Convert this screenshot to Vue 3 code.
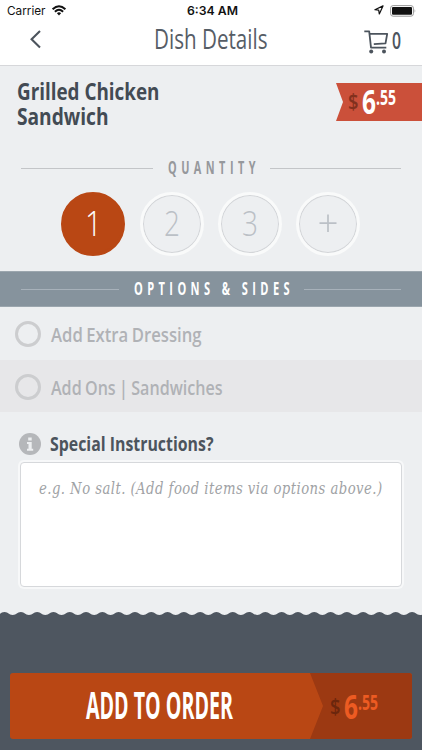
<script setup>
import { h, ref } from 'vue'

// Condensed label: real text fitted to a fixed advance width.
const FitText = (p) =>
  h('svg', { width: p.w, height: p.h }, [
    h('text', { x: 0, y: p.base, textLength: p.w, lengthAdjust: 'spacingAndGlyphs' }, p.t),
  ])
FitText.props = ['t', 'w', 'h', 'base']

const quantity = ref(0)
const amounts = [
  { t: '1', w: 17 },
  { t: '2', w: 16 },
  { t: '3', w: 16 },
  { t: '+', w: 0 },
]
const options = [
  { t: 'Add Extra Dressing', w: 150.5 },
  { t: 'Add Ons | Sandwiches', w: 171.5 },
]

// Scalloped upper edge of the footer
let wave = 'M-3.6 3'
for (let i = 0; i < 28; i++) wave += ' c4 0 4.2 -3 8.15 -3 s4.1 3 8.15 3'
wave += ' V6 H-4 Z'
</script>

<template>
  <main class="screen">
    <header class="top">
      <div class="status">
        <div class="carrier">
          <FitText t="Carrier" :w="38.5" :h="20" :base="15.3" />
          <svg class="wifi" width="14" height="11" viewBox="0 0 14 11">
            <path d="M.6 4.3 Q7 -1.7 13.4 4.3" />
            <path d="M2.9 6.7 Q7 2.9 11.1 6.7" />
            <path class="dot" d="M4.9 8.2 Q7 6.5 9.1 8.2 L7 10.4 Z" />
          </svg>
        </div>
        <FitText class="clock" t="6:34 AM" :w="51" :h="20" :base="15.3" />
        <div class="power">
          <svg width="10" height="10" viewBox="0 0 10 10">
            <path class="arrow" d="M9 .9 L.9 4.7 L4.7 5.2 L5.3 9 Z" />
          </svg>
          <svg width="27" height="12" viewBox="0 0 27 12">
            <rect class="shell" x=".6" y=".6" width="22.8" height="10.6" rx="2.5" />
            <rect x="2" y="2" width="20" height="7.8" rx="1" />
            <path class="cap" d="M24.6 4 Q26.2 5.9 24.6 7.8 Z" />
          </svg>
        </div>
      </div>
      <nav class="bar">
        <svg class="back" width="12" height="19" viewBox="0 0 12 19">
          <path d="M10 1 L1.6 9.2 L10 17.4" />
        </svg>
        <FitText class="title" t="Dish Details" :w="113.5" :h="32" :base="27.3" />
        <div class="cart">
          <svg width="25" height="25" viewBox="0 0 25 25">
            <path d="M.3 1.3 H5.2 L7 17.6 H22.3 M5.7 3.8 H23.2 L21.5 13.4 L9.8 14.2" />
            <circle cx="7.2" cy="21.4" r="2" />
            <circle cx="20" cy="21.4" r="2" />
          </svg>
          <FitText class="count" t="0" :w="9" :h="25" :base="19.2" />
        </div>
      </nav>
    </header>

    <section class="dish">
      <h1>
        <FitText t="Grilled Chicken" :w="142.5" :h="25" :base="19" />
        <FitText t="Sandwich" :w="91.5" :h="25" :base="19" />
      </h1>
      <div class="ribbon">
        <FitText class="cur" t="$" :w="10.5" :h="38" :base="26.3" />
        <FitText class="whole" t="6" :w="14" :h="38" :base="31" />
        <FitText class="cents" t=".55" :w="20" :h="38" :base="22" />
      </div>
    </section>

    <div class="heading">
      <i></i>
      <FitText t="QUANTITY" :w="92" :h="20" :base="16" />
      <i></i>
    </div>

    <div class="amounts">
      <button v-for="(a, i) in amounts" :key="a.t" :class="{ on: quantity === i }" @click="quantity = i">
        <FitText v-if="a.w" :t="a.t" :w="a.w" :h="40" :base="31.5" />
        <svg v-else class="plus" width="18" height="20" viewBox="0 0 18 20"><path d="M.5 9.2 H17.5 M9 .5 V18" /></svg>
      </button>
    </div>

    <div class="heading band">
      <i></i>
      <FitText t="OPTIONS &amp; SIDES" :w="160" :h="20" :base="16" />
      <i></i>
    </div>

    <ul class="options">
      <li v-for="o in options" :key="o.t">
        <span class="radio"></span>
        <FitText :t="o.t" :w="o.w" :h="28" :base="21.5" />
      </li>
    </ul>

    <section class="notes">
      <div class="label">
        <svg class="info" width="22" height="22" viewBox="0 0 22 22">
          <circle cx="11" cy="11" r="11" />
          <path d="M9.2 4.5 h3.5 v3 h-3.5 z M8 9 h4.7 v6.8 h1.5 v2 H8 v-2 h1.5 v-4.8 H8 z" />
        </svg>
        <FitText t="Special Instructions?" :w="163.5" :h="28" :base="21" />
      </div>
      <div class="field">
        <FitText t="e.g. No salt. (Add food items via options above.)" :w="343.5" :h="28" :base="20" />
      </div>
    </section>

    <footer>
      <svg class="wave" width="422" height="6"><path :d="wave" /></svg>
      <button class="order">
        <FitText class="cta" t="ADD TO ORDER" :w="147" :h="66" :base="46" />
        <span class="total">
          <FitText class="cur" t="$" :w="10.5" :h="66" :base="40.5" />
          <FitText class="whole" t="6" :w="14" :h="66" :base="46" />
          <FitText class="cents" t=".55" :w="20" :h="66" :base="37" />
        </span>
      </button>
    </footer>
  </main>
</template>

<style>
body { margin: 0; background: #edeef0; }
</style>

<style scoped>
.screen {
  width: 422px;
  height: 750px;
  overflow: hidden;
  display: flex;
  flex-direction: column;
  background: #edeff1;
  font-family: "Open Sans", "Noto Sans", sans-serif;
  color: #4c545d;
}
svg { display: block; flex: none; overflow: visible; fill: currentColor; }
button { border: 0; padding: 0; margin: 0; font-family: inherit; cursor: pointer; }

.top { height: 65px; background: #fff; border-bottom: 1px solid #d6d7da; box-sizing: content-box; flex: none; }
.status {
  height: 20px;
  display: grid;
  grid-template-columns: 1fr auto 1fr;
  padding: 0 5px 0 7px;
  font-family: Inter, "Liberation Sans", sans-serif;
  font-size: 12px;
  color: #111;
}
.carrier { display: flex; gap: 6px; }
.wifi { margin-top: 5px; }
.wifi path { fill: none; stroke: #111; stroke-width: 2; }
.wifi .dot { fill: #111; stroke: none; }
.clock { font-weight: 600; }
.power { display: flex; justify-content: flex-end; align-items: flex-start; gap: 6px; padding-top: 5px; }
.arrow { fill: none; stroke: #111; stroke-width: 1.2; stroke-linejoin: round; }
.shell { fill: none; stroke: #999; stroke-width: 1; }
.cap { fill: #999; }
.bar { display: grid; grid-template-columns: 124px 210px 58px; padding: 2px 0 0 30px; }
.back { margin-top: 8px; }
.back path { fill: none; stroke: #4c545d; stroke-width: 2.1; }
.title { font-size: 26.5px; font-weight: 400; color: #565d66; }
.cart { display: flex; gap: 3px; padding-top: 8px; }
.cart path { fill: none; stroke: #4c545d; stroke-width: 1.8; stroke-linejoin: round; }
.count { font-size: 23px; font-weight: 600; }

.dish { height: 91.5px; display: flex; justify-content: space-between; flex: none; }
h1 { margin: 15px 0 0 16.8px; font-size: 23px; font-weight: 700; color: #434b54; }
.ribbon {
  width: 74px;
  height: 38px;
  margin-top: 17px;
  padding-left: 12px;
  display: flex;
  background: #cb503a;
  clip-path: polygon(0 0, 100% 0, 100% 100%, 0 100%, 7px 50%);
  color: #fff;
  font-weight: 700;
}
.cur { font-size: 22px; font-weight: 600; color: #83301d; margin-right: 3.5px; }
.whole { font-size: 33.5px; }
.cents { font-size: 21.5px; }

.heading { height: 21px; display: flex; align-items: center; gap: 15px; padding: 0 21px; font-size: 17px; font-weight: 700; letter-spacing: 7px; color: #96989c; flex: none; }
.heading i { flex: 1; height: 1px; background: #c3c5c8; }
.heading svg { margin-right: -5px; }
.amounts { height: 92.5px; display: flex; gap: 14.4px; padding: 13.5px 0 0 61.3px; box-sizing: border-box; flex: none; }
.amounts button {
  width: 64px;
  height: 64px;
  border-radius: 50%;
  display: grid;
  place-items: center;
  background: #edeff1;
  border: 3px solid #f9fafa;
  box-shadow: inset 0 0 0 1px #d3d5d8;
  font-size: 35px;
  font-weight: 300;
  color: #bbc0c6;
}
.amounts .on { background: #b94714; border-color: #b94714; box-shadow: none; color: #fff; }
.plus path { fill: none; stroke: #bbc0c6; stroke-width: 1.7; }

.band { height: 36px; box-sizing: border-box; background: #86939d; border-top: 1px solid #9ba6ae; border-bottom: 1px solid #9ba6ae; color: #fff; font-size: 17.5px; }
.band i { background: #a7b1ba; }

.options { list-style: none; margin: 0; padding: 0; flex: none; }
.options li { height: 52.5px; display: flex; align-items: center; gap: 10px; padding: 2px 0 0 15px; box-sizing: border-box; font-size: 20px; font-weight: 600; word-spacing: -1px; color: #b0b2b6; }
.options li:nth-child(2) { background: #e7e7e9; }
.radio { width: 26px; height: 26px; box-sizing: border-box; border: 3px solid #cccdcf; border-radius: 50%; }

.notes { height: 200px; padding: 18px 20px 0 19px; box-sizing: border-box; flex: none; }
.label { display: flex; align-items: center; gap: 9px; height: 28px; font-size: 20px; font-weight: 700; }
.info { color: #b5b7ba; }
.info path { fill: #edeff1; }
.field {
  height: 125px;
  margin: 4px 0 0 1px;
  padding: 11px 0 0 18px;
  box-sizing: border-box;
  background: #fff;
  border: 1px solid #d6d8db;
  border-radius: 4px;
  box-shadow: 0 0 0 2px #f7f8f9;
  font-family: "DejaVu Serif Condensed", "DejaVu Serif", serif;
  font-style: italic;
  font-size: 16.5px;
  letter-spacing: .5px;
  color: #a0a2a5;
}
footer { flex: 1; display: flex; flex-direction: column; background: linear-gradient(transparent 5px, #4e5660 5px); }
.wave { color: #4e5660; }
.order {
  width: 402px;
  height: 66px;
  margin: 55px 0 0 10px;
  padding-left: 75.5px;
  display: flex;
  justify-content: space-between;
  border-radius: 3px;
  overflow: hidden;
  background: #b94714;
  color: #fff;
  font-size: 37px;
  font-weight: 700;
}
.total { width: 82px; padding-left: 20px; display: flex; background: #9c3912; clip-path: polygon(0 0, 100% 0, 100% 100%, 0 100%, 13px 50%); color: #ed5b22; }
.total .cur { color: #6b260d; }
</style>
